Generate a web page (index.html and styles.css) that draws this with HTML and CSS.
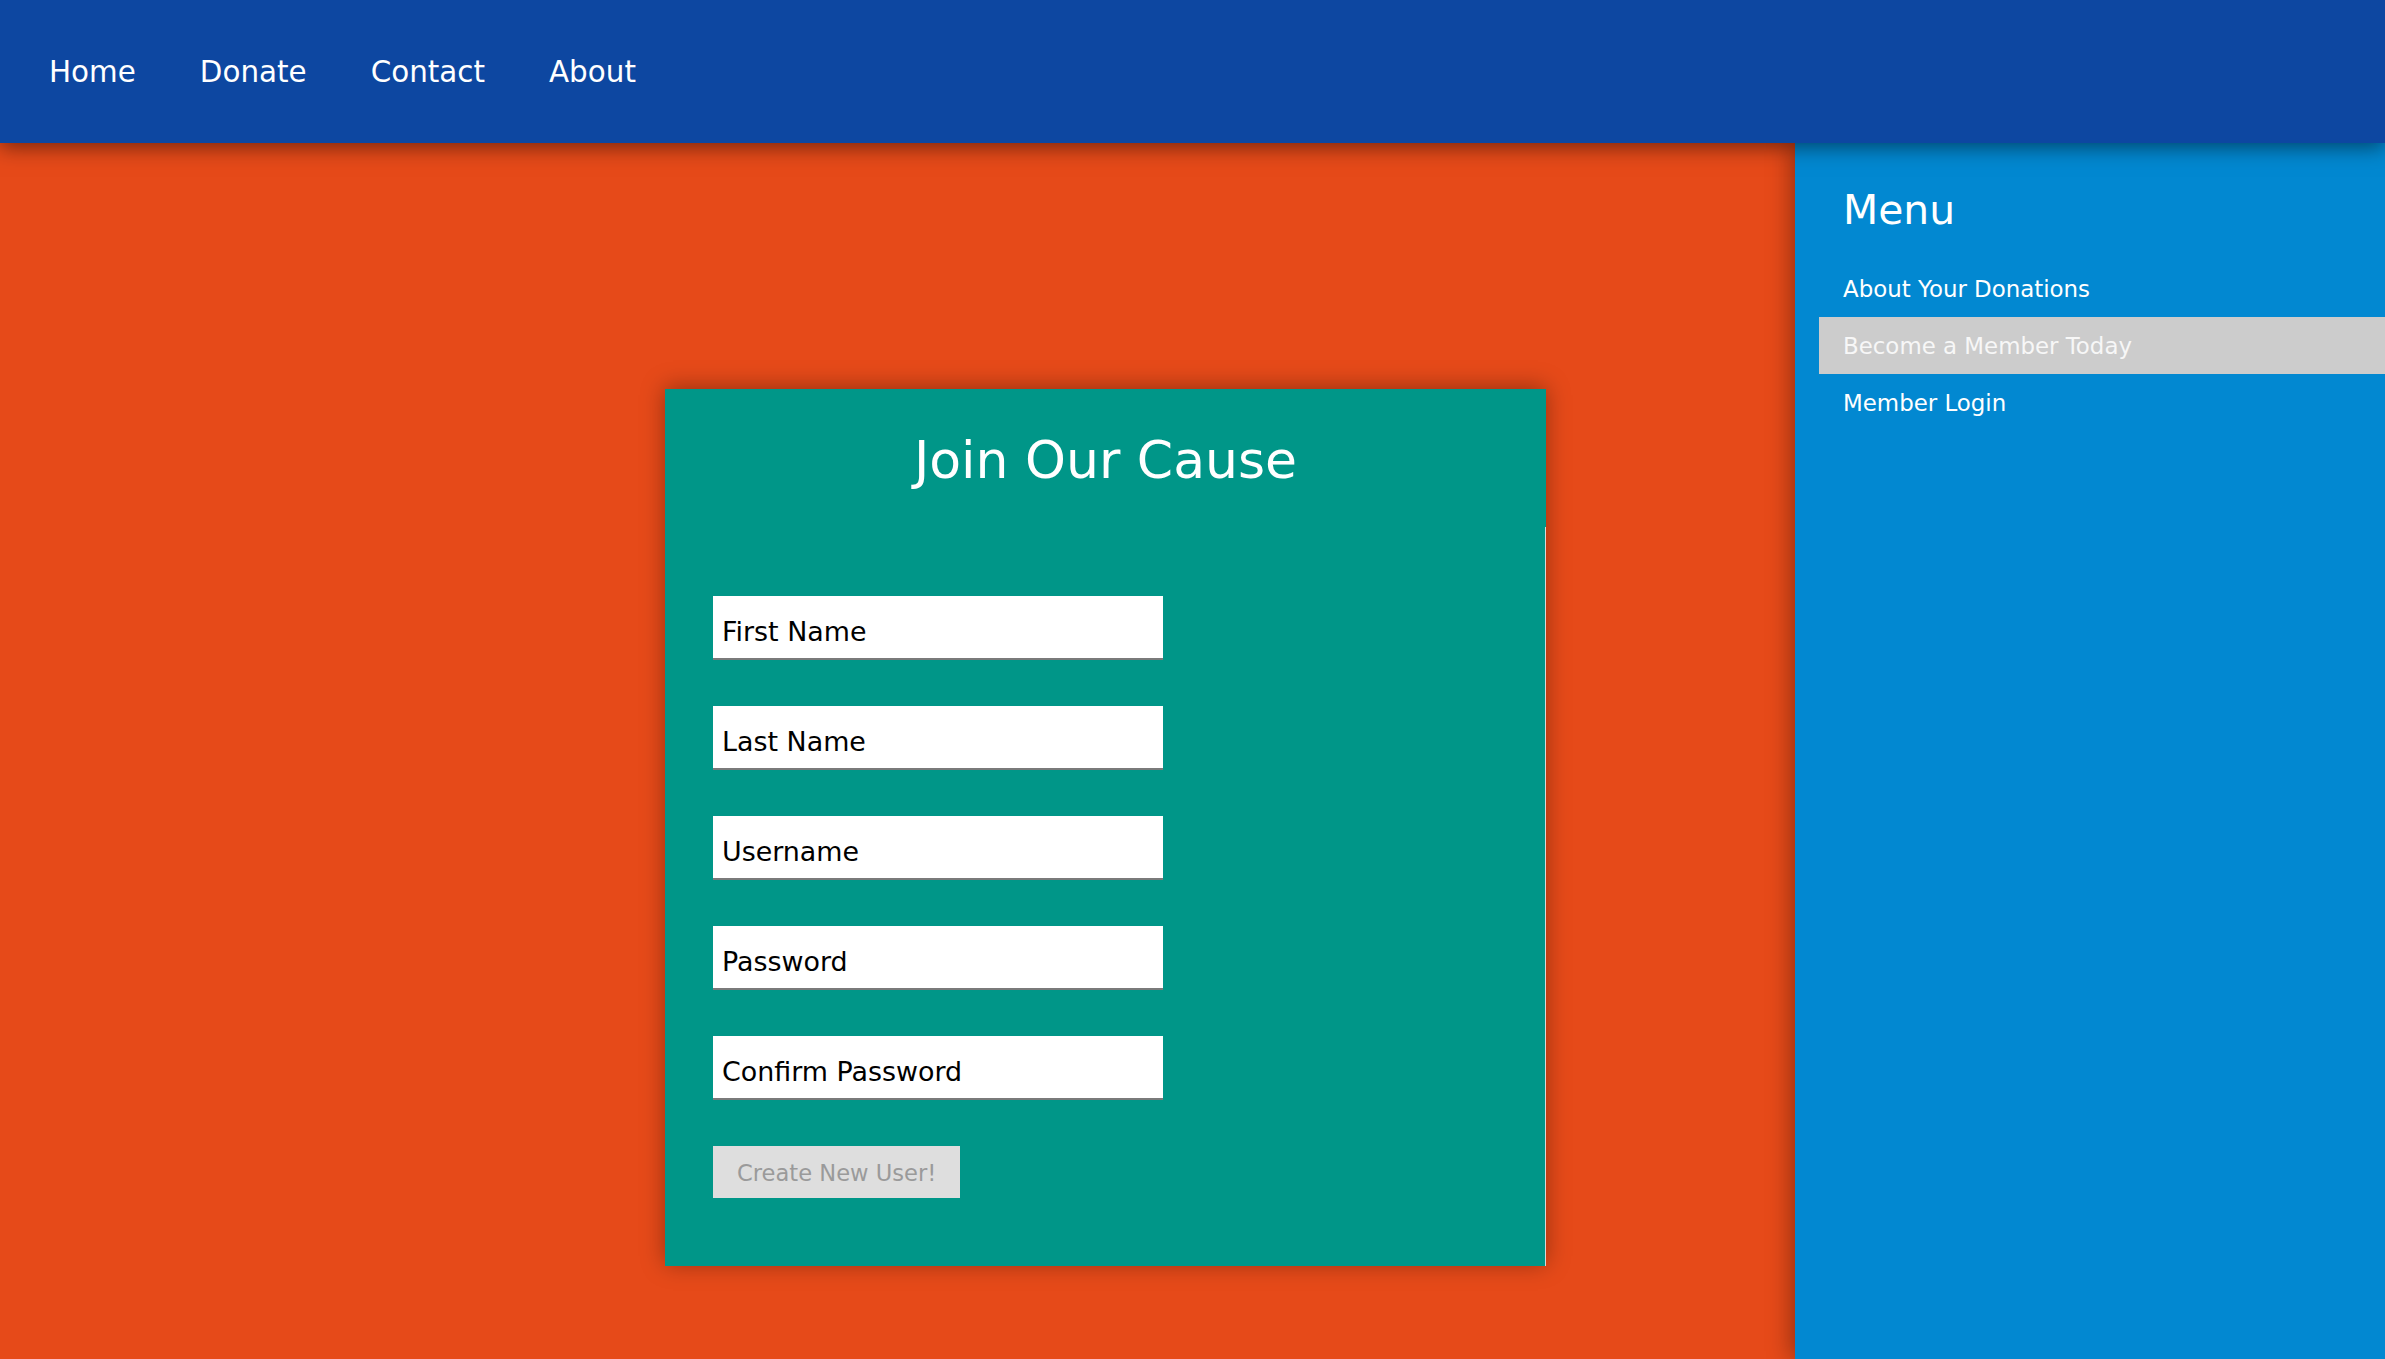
FILE: index.html
```html
<!DOCTYPE html>
<html lang="en">
<head>
<meta charset="utf-8">
<title>Join Our Cause</title>
<link rel="stylesheet" href="styles.css">
</head>
<body>
<header class="topbar">
  <nav class="topnav">
    <a href="#" class="topnav-link">Home</a>
    <a href="#" class="topnav-link">Donate</a>
    <a href="#" class="topnav-link">Contact</a>
    <a href="#" class="topnav-link">About</a>
  </nav>
</header>
<div class="layout">
  <main class="content">
    <section class="card">
      <div class="card-head">
        <h1 class="card-title">Join Our Cause</h1>
      </div>
      <form class="card-form">
        <input class="field" type="text" placeholder="First Name">
        <input class="field" type="text" placeholder="Last Name">
        <input class="field" type="text" placeholder="Username">
        <input class="field" type="password" placeholder="Password">
        <input class="field" type="password" placeholder="Confirm Password">
        <button class="submit" type="button" disabled>Create New User!</button>
      </form>
    </section>
  </main>
  <aside class="sidebar">
    <h2 class="sidebar-title">Menu</h2>
    <ul class="side-menu">
      <li><a href="#" class="side-link">About Your Donations</a></li>
      <li><a href="#" class="side-link is-active">Become a Member Today</a></li>
      <li><a href="#" class="side-link">Member Login</a></li>
    </ul>
  </aside>
</div>
</body>
</html>
```
FILE: styles.css
```css
* { box-sizing: border-box; }

html, body {
  margin: 0;
  padding: 0;
  height: 100%;
  overflow: hidden;
}

body {
  font-family: "DejaVu Sans", Verdana, sans-serif;
  background: #e64a19;
  display: flex;
  flex-direction: column;
}

.topbar {
  height: 143px;
  flex: 0 0 143px;
  background: #0d47a1;
  display: flex;
  align-items: center;
  padding-left: 49px;
  position: relative;
  z-index: 3;
  box-shadow: 0 4px 20px rgba(0, 0, 0, 0.5);
}

.topnav {
  display: flex;
  gap: 64px;
}

.topnav-link {
  color: #fff;
  text-decoration: none;
  font-size: 29.4px;
  line-height: 1;
  padding-top: 3px;
}

.layout {
  flex: 1;
  display: flex;
  min-height: 0;
}

.content {
  flex: 1;
  background: #e64a19;
  padding: 246px 0 0 665px;
}

.card {
  width: 881px;
  height: 877px;
  background: #009688;
  box-shadow: 0 -2px 22px rgba(0, 0, 0, 0.35);
  display: flex;
  flex-direction: column;
}

.card-head {
  height: 138px;
  padding-top: 41px;
}

.card-title {
  margin: 0;
  text-align: center;
  color: #fff;
  font-weight: normal;
  font-size: 52px;
  line-height: 1.164;
}

.card-form {
  flex: 1;
  display: flex;
  flex-direction: column;
  align-items: flex-start;
  gap: 46px;
  padding: 69px 0 0 48px;
  border-right: 1px solid #d8d8d8;
}

.field {
  width: 450px;
  height: 64px;
  margin: 0;
  border: 0;
  border-bottom: 2px solid #7a7a7a;
  background: #fff;
  padding: 20px 9px 11px;
  font-family: "DejaVu Sans", Verdana, sans-serif;
  font-size: 26.9px;
  line-height: 1.164;
  color: #000;
  outline: none;
}

.field::placeholder {
  color: #000;
  opacity: 1;
}

.submit {
  height: 52px;
  margin: 0;
  border: 0;
  background: #dedede;
  color: #9a9a9a;
  padding: 2px 24px 0;
  font-family: "DejaVu Sans", Verdana, sans-serif;
  font-size: 22.6px;
}

.sidebar {
  flex: 0 0 590px;
  background: #0288d1;
  padding: 44px 0 0 24px;
  position: relative;
  z-index: 2;
  box-shadow: -4px 0 22px rgba(0, 0, 0, 0.35);
}

.sidebar-title {
  margin: 0 0 26px;
  padding-left: 24px;
  color: #fff;
  font-weight: normal;
  font-size: 40.8px;
  line-height: 1.164;
}

.side-menu {
  list-style: none;
  margin: 0;
  padding: 0;
}

.side-link {
  display: block;
  height: 57px;
  padding: 16px 24px 0;
  color: #fff;
  text-decoration: none;
  font-size: 22.9px;
  line-height: 1.164;
}

.side-link.is-active {
  background: #cccccc;
  color: #f7f7f7;
}
```
